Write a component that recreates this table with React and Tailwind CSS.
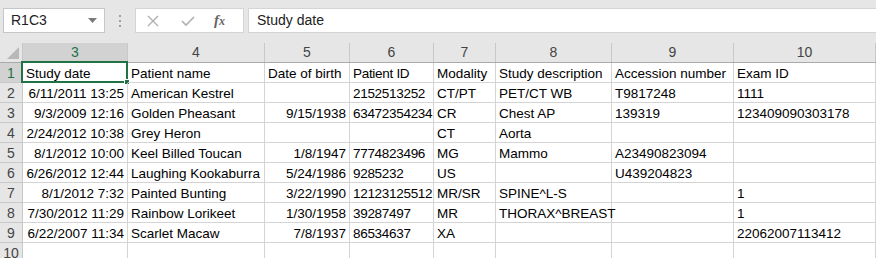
import React from 'react';

const cols = [
    { n: 3, w: 105 },
    { n: 4, w: 137 },
    { n: 5, w: 85 },
    { n: 6, w: 84 },
    { n: 7, w: 62 },
    { n: 8, w: 116 },
    { n: 9, w: 122 },
    { n: 10, w: 142 },
];

// r = right aligned
const rows = [
    [['Study date'], ['Patient name'], ['Date of birth'], ['Patient ID'], ['Modality'], ['Study description'], ['Accession number'], ['Exam ID']],
    [['6/11/2011 13:25', 'r'], ['American Kestrel'], [''], ['2152513252'], ['CT/PT'], ['PET/CT WB'], ['T9817248'], ['1111']],
    [['9/3/2009 12:16', 'r'], ['Golden Pheasant'], ['9/15/1938', 'r'], ['63472354234'], ['CR'], ['Chest AP'], ['139319'], ['123409090303178']],
    [['2/24/2012 10:38', 'r'], ['Grey Heron'], [''], [''], ['CT'], ['Aorta'], [''], ['']],
    [['8/1/2012 10:00', 'r'], ['Keel Billed Toucan'], ['1/8/1947', 'r'], ['7774823496'], ['MG'], ['Mammo'], ['A23490823094'], ['']],
    [['6/26/2012 12:44', 'r'], ['Laughing Kookaburra'], ['5/24/1986', 'r'], ['9285232'], ['US'], [''], ['U439204823'], ['']],
    [['8/1/2012 7:32', 'r'], ['Painted Bunting'], ['3/22/1990', 'r'], ['12123125512'], ['MR/SR'], ['SPINE^L-S'], [''], ['1']],
    [['7/30/2012 11:29', 'r'], ['Rainbow Lorikeet'], ['1/30/1958', 'r'], ['39287497'], ['MR'], ['THORAX^BREAST'], [''], ['1']],
    [['6/22/2007 11:34', 'r'], ['Scarlet Macaw'], ['7/8/1937', 'r'], ['86534637'], ['XA'], [''], [''], ['22062007113412']],
    [[''], [''], [''], [''], [''], [''], [''], ['']],
];

function App() {
    return (
        <div className="w-[876px] h-[258px] overflow-hidden bg-white text-black" style={{ fontFamily: '"Liberation Sans", Arial, sans-serif' }}>
            {/* formula bar */}
            <div className="h-[43px] bg-[#e6e6e6] flex items-start pt-[8px] pl-[3px]">
                <div className="w-[102px] h-[25px] bg-white border border-[#c6c6c6] flex items-center justify-between pl-[7px] pr-[7px] text-[14px] text-[#222]">
                    <span>R1C3</span>
                    <svg width="9" height="5" viewBox="0 0 9 5"><path d="M0 0 L9 0 L4.5 5 Z" fill="#7a7a7a" /></svg>
                </div>
                <div className="w-[30px] h-[25px] flex flex-col items-center justify-center gap-[3px]">
                    <div className="w-[2px] h-[2px] bg-[#a0a0a0]"></div>
                    <div className="w-[2px] h-[2px] bg-[#a0a0a0]"></div>
                    <div className="w-[2px] h-[2px] bg-[#a0a0a0]"></div>
                </div>
                <div className="w-[109px] h-[25px] bg-white border border-[#d4d4d4] flex items-center">
                    <svg className="ml-[11px]" width="12" height="12" viewBox="0 0 12 12"><path d="M1 1 L11 11 M11 1 L1 11" stroke="#b0b0b0" strokeWidth="1.4" /></svg>
                    <svg className="ml-[22px]" width="14" height="12" viewBox="0 0 14 12"><path d="M1 6 L5 10 L13 2" stroke="#b0b0b0" strokeWidth="1.6" fill="none" /></svg>
                    <span className="ml-[19px] text-[15px] italic font-bold text-[#666]" style={{ fontFamily: '"Liberation Serif", serif' }}>f<span className="text-[12px]">x</span></span>
                </div>
                <div className="ml-[4px] flex-1 h-[25px] bg-white border border-[#d4d4d4] border-r-0 flex items-center pl-[8px] text-[14px] text-[#222]">
                    Study date
                </div>
            </div>

            {/* grid */}
            <div className="flex h-[20px] bg-[#e6e6e6] border-b border-[#ababab]">
                <div className="w-[23px] h-[19px] border-r border-[#c8c8c8] flex items-end justify-end pr-[3px] pb-[3px]">
                    <svg width="12" height="12" viewBox="0 0 12 12"><path d="M12 0 L12 12 L0 12 Z" fill="#b8b8b8" /></svg>
                </div>
                {cols.map((c, i) => (
                    <div
                        key={c.n}
                        style={{ width: c.w }}
                        className={`h-[19px] shrink-0 border-r border-[#c8c8c8] flex items-center justify-center text-[14px] ${i === 0 ? 'bg-[#d2d2d2] text-[#217346]' : 'text-[#444]'}`}
                    >
                        {c.n}
                    </div>
                ))}
            </div>
            {rows.map((r, ri) => (
                <div key={ri} className="flex h-[20px]">
                    <div className={`w-[23px] h-[20px] shrink-0 border-r border-b border-[#c8c8c8] flex items-center justify-center pt-[1px] text-[14px] ${ri === 0 ? 'bg-[#d2d2d2] text-[#217346]' : 'bg-[#e6e6e6] text-[#444]'}`}>
                        {ri + 1}
                    </div>
                    {r.map((cell, ci) => (
                        <div
                            key={ci}
                            style={{ width: cols[ci].w }}
                            className={`relative h-[20px] shrink-0 border-r border-b border-[#d4d4d4] px-[3px] pt-[1px] leading-[19px] whitespace-nowrap text-[13.5px] ${cell[1] === 'r' ? 'text-right' : 'text-left'} ${ci === 3 ? 'tracking-[-0.3px]' : ''}`}
                        >
                            {cell[0]}
                            {ri === 0 && ci === 0 && (
                                <div className="absolute left-[-2px] top-[-2px] right-[-1px] bottom-[-1px] border-2 border-[#217346]">
                                    <div className="absolute right-[-4px] bottom-[-4px] w-[6px] h-[6px] bg-[#217346] border border-white"></div>
                                </div>
                            )}
                        </div>
                    ))}
                </div>
            ))}
        </div>
    );
}

export default App;
